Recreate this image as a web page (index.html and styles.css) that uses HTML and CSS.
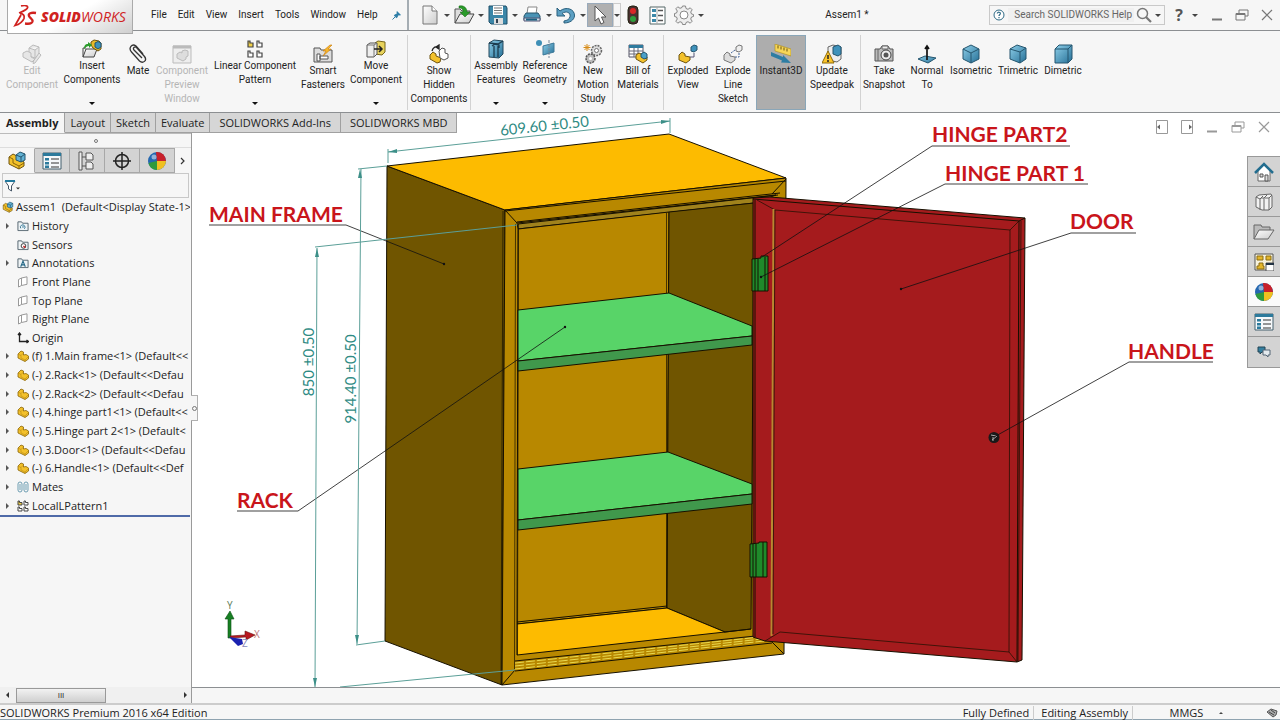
FILE: index.html
```html
<!DOCTYPE html>
<html lang="en">
<head>
<meta charset="utf-8">
<title>Assem1 - SOLIDWORKS</title>
<link rel="stylesheet" href="styles.css">
</head>
<body>
<svg class="defs" aria-hidden="true">
  <defs>
    <linearGradient id="blue" x1="0" y1="0" x2="1" y2="1"><stop offset="0" stop-color="#8fd0ea"/><stop offset="1" stop-color="#256f96"/></linearGradient>
    <linearGradient id="paper" x1="0" y1="0" x2="1" y2="1"><stop offset="0" stop-color="#fff"/><stop offset="1" stop-color="#ccc"/></linearGradient>
  </defs>
  <symbol id="i-part" viewBox="0 0 12 12"><path d="M1 4 4 1l2.500 1v3L9 4.500l2.500 1.500v3L8 11.500 1 8z" fill="#f3c12b" stroke="#8a6508" stroke-width=".8"/><path d="M1 4l3 1.500V8l4 2 3.500-3.500M4 5.500 6.500 3M8 10v1.500" fill="none" stroke="#b98a14" stroke-width=".6"/></symbol>
  <symbol id="i-asm" viewBox="0 0 20 20"><path d="M2 6 6 3l4 2v4l3-1 4 3v4l-5 3-10-5z" fill="#f3c12b" stroke="#6f5410"/><path d="M2 6l4 2v4l6 3 5-3M12 15v3" fill="none" stroke="#8a6508"/><path d="M9 4l4-3 5 2v6l-4 2-5-2z" fill="#63b2d4" stroke="#24556e"/><path d="M9 4l5 2 4-3M14 6v5" fill="none" stroke="#24556e"/></symbol>
  <symbol id="i-ball" viewBox="0 0 20 20"><circle cx="10" cy="10" r="9" fill="#2467b0"/><path d="M10 10 9 1A9 9 0 0 1 19 10z" fill="#c8202a"/><path d="M10 10h9A9 9 0 0 1 10 19z" fill="#f0c020"/><path d="M10 10v9A9 9 0 0 1 1.500 12z" fill="#2f9a3c"/><circle cx="7" cy="6" r="2.500" fill="#fff" opacity=".5"/></symbol>
  <symbol id="i-list" viewBox="0 0 20 18"><path d="M1 1h18v16H1z" fill="#f5f8fa" stroke="#44606e"/><path d="M1 1h18v3H1z" fill="#2c7a9c"/><path d="M3 6h4v2.500H3zM3 10h4v2.500H3zM3 13.500h4V16H3z" fill="#2c7a9c"/><path d="M9 7h8M9 11h8M9 15h8" stroke="#333"/></symbol>
  <symbol id="i-restore" viewBox="0 0 14 12"><path d="M4 4V1h9v6h-3M1 4.500h9V11H1z" fill="none" stroke="currentColor"/><path d="M1 5.500h9" stroke="currentColor"/></symbol>
  <symbol id="i-close" viewBox="0 0 12 12"><path d="M1 1l10 10M11 1 1 11" stroke="currentColor" stroke-width="1.200"/></symbol>
  <symbol id="i-min" viewBox="0 0 12 12"><path d="M1 10.500h10" stroke="currentColor" stroke-width="2"/></symbol>
  <symbol id="i-plane" viewBox="0 0 12 12"><path d="M1.500 3.500 4.500 2v7.500L1.500 11zM4.500 2 10 .8v7.500L4.500 9.500" fill="#fff" stroke="#999"/></symbol>
  <symbol id="i-folder" viewBox="0 0 13 12"><path d="M1 11V1.500h4L6 3h6v8z" fill="#eef3f5" stroke="#4e6069"/></symbol>
</svg>

<header class="titlebar">
  <div class="logo">
    <svg width="24" height="24" viewBox="0 0 24 24" fill="none" stroke="#d0221f"><path d="M8 1c5-1.500 9 .5 5 3.500-2 1.500-4 2.300-7 3.500" stroke-width="1.700"/><path d="M7 8.500c3 0 5 2 4 5-1.500 3.500-5 6-9 7L8 10" stroke-width="1.800"/><path d="M23 8c-5-.8-8 .5-7 3 1 2.500 4 3 3.500 5.500-.5 2-4 2.500-7.500 2" stroke-width="2.300"/></svg>
    <span class="wordmark"><b>SOLID</b>WORKS</span>
  </div>
  <nav class="menus">
    <button>File</button><button>Edit</button><button>View</button><button>Insert</button><button>Tools</button><button>Window</button><button>Help</button>
  </nav>
  <svg class="pin" width="10" height="10" viewBox="0 0 10 10"><path d="M5 1l4 4-1 .5-1.500-.3-1 2-1 1L1.800 5.500l1-1 2-1L4.500 2z" fill="#2f7fa8"/><path d="M3 7 .5 9.500" stroke="#2f7fa8"/></svg>
  <div class="quick">
    <button class="q" aria-label="New"><svg width="18" height="20" viewBox="0 0 18 20"><path d="M2 1h9l5 5v13H2z" fill="url(#paper)" stroke="#777"/><path d="M11 1v5h5" fill="#fff" stroke="#777"/></svg></button><button class="drop" aria-label="New options"></button>
    <button class="q" aria-label="Open"><svg width="22" height="20" viewBox="0 0 22 20"><path d="M2 18V4h5l2 2h8v4" fill="#ddd" stroke="#555"/><path d="M2 18 7 9h14l-5 9z" fill="url(#paper)" stroke="#444"/><path d="M6 1c5-1 8 2 8 6h3l-5 5-5-5h3c0-3-1-4-4-4z" fill="#2a9a2a" stroke="#176717" stroke-width=".5"/></svg></button><button class="drop" aria-label="Open options"></button>
    <button class="q" aria-label="Save"><svg width="20" height="20" viewBox="0 0 20 20"><path d="M1 1h17l1 2v16H3l-2-2z" fill="#3b86a8" stroke="#1f4f68"/><path d="M5 1h10v9H5z" fill="#fff"/><path d="M6 3h8M6 5.500h8M6 8h8" stroke="#777"/><path d="M6 13h9v6H6z" fill="#ddd"/><path d="M8 14h2v4H8z" fill="#345"/></svg></button><button class="drop" aria-label="Save options"></button>
    <button class="q" aria-label="Print"><svg width="18" height="18" viewBox="0 0 18 18"><path d="M5 1h9l-1 7H4z" fill="#fff" stroke="#888"/><path d="M3 7h12l2 3v4H1v-4z" fill="#4a93b5" stroke="#28566d"/><path d="M1 12h16v3H1z" fill="#cfdde4" stroke="#557"/><path d="M3 13.500h11" stroke="#1d6283" stroke-width="2"/></svg></button><button class="drop" aria-label="Print options"></button>
    <button class="q" aria-label="Undo"><svg width="20" height="18" viewBox="0 0 20 18"><path d="M1 2v8h8L6 7.500c4-3 9-1 8 3-.5 3-3 4-6 4.500v2c6 0 10-3 10.500-7C19 3 10 0 4 5z" fill="#5c9fc2" stroke="#285f7d"/></svg></button><button class="drop" aria-label="Undo options"></button>
    <button class="q select" aria-label="Select"><svg width="14" height="20" viewBox="0 0 14 20"><path d="M2 1v15l3.500-3L8 19l3-1.500L8.500 12H13z" fill="#fff" stroke="#555"/></svg></button><button class="drop boxed" aria-label="Select options"></button>
    <button class="q light" aria-label="Rebuild"><svg width="12" height="20" viewBox="0 0 12 20"><rect x="1" y="1" width="10" height="18" rx="4" fill="#4b3030" stroke="#221"/><circle cx="6" cy="6" r="3" fill="#d92727"/><circle cx="6" cy="14" r="3" fill="#2e9e3c"/></svg></button>
    <button class="q" aria-label="File properties"><svg width="17" height="19" viewBox="0 0 17 19"><path d="M1 1h15v17H1z" fill="#fff" stroke="#566"/><path d="M3 3h4v3H3zM3 8h4v3H3zM3 13h4v3H3z" fill="#3d88a8"/><path d="M9 4.500h5M9 9.500h5M9 14.500h5" stroke="#555" stroke-width="1.500"/><path d="M8 1v17" stroke="#aaa"/></svg></button>
    <button class="q" aria-label="Options"><svg width="20" height="20" viewBox="0 0 20 20" fill="#eee" stroke="#888"><path d="M8.500 1h3l.5 2.500 2 .8 2.200-1.500 2 2L16.700 7l.8 2 2 .5v2l-2 .5-.8 2 1.500 2.200-2 2-2.200-1.500-2 .8-.5 2h-3L8 17.500l-2-.8-2.200 1.500-2-2L3.300 14l-.8-2L.5 11.500v-3L2.500 8l.8-2-1.500-2.200 2-2L6 3.300l2-.8z"/><circle cx="10" cy="10" r="4" fill="#fff"/></svg></button><button class="drop" aria-label="More options"></button>
  </div>
  <h1 class="doc-title">Assem1 *</h1>
  <div class="search">
    <svg width="14" height="14" viewBox="0 0 14 14"><circle cx="7" cy="7" r="5" fill="#fff" stroke="#2f6b86"/><path d="M5.300 5.500c.2-2 3.500-1.500 3 .3-.3 1-1.300 1-1.300 2.200M7 9v1.200" fill="none" stroke="#2f6b86" stroke-width="1.200"/></svg>
    <input type="text" aria-label="Search help" placeholder="Search SOLIDWORKS Help">
    <svg width="16" height="16" viewBox="0 0 16 16" fill="none" stroke="#777"><circle cx="6.500" cy="6.500" r="5" stroke-width="1.500"/><path d="M10 10l5 5" stroke-width="2.200"/></svg>
    <button class="drop" aria-label="Search options"></button>
  </div>
  <div class="window-tools">
    <button class="help" aria-label="Help">?</button><button class="drop" aria-label="Help options"></button>
    <button aria-label="Minimize"><svg width="12" height="12"><use href="#i-min"/></svg></button>
    <button aria-label="Restore"><svg width="14" height="12"><use href="#i-restore"/></svg></button>
    <button aria-label="Close"><svg width="12" height="12"><use href="#i-close"/></svg></button>
  </div>
</header>

<div class="ribbon">
  <div class="group">
    <button class="tool w58" disabled><svg width="20" height="20" viewBox="0 0 20 20" fill="#e6e6e6" stroke="#bbb"><path d="M7 4l4-3 6 2v8l-4 3-6-2zM7 4l6 2 4-3M13 6v8"/><path d="M1 9l4-2 4 2v4l4 2-3 3-9-5zM17 9l2 2-6 8-2 .5.5-2.500z"/></svg><span>Edit<br>Component</span></button>
    <button class="tool menu w62"><svg width="20" height="20" viewBox="0 0 20 20"><path d="M1 18 4 10h11l-3 8z" fill="url(#paper)" stroke="#444"/><path d="M1 18V9h3" fill="none" stroke="#444"/><path d="M9 3l3-2 5 1 2 2v6l-3 2-5-3-2-3z" fill="#e9b928" stroke="#6f5410"/><path d="M13 4l3-1.500 3 1.500v4l-3 2-3-2z" fill="#3f92bb" stroke="#24556e"/><path d="M2 10c0-3 1-5 4-5V3l4 3-3 3V7C5 7 4 8 2 10z" fill="#2c9c2c"/></svg><span>Insert<br>Components</span></button>
    <button class="tool w30"><svg width="20" height="20" viewBox="0 0 20 20" fill="none" stroke="#333" stroke-width="1.300"><path d="M14 14 6 6c-1.500-2 .5-4 2.500-2.500l8 9c3 4-1.500 7.500-5 4.500l-8-9C0 4 4-1 8 2l7 8"/></svg><span>Mate</span></button>
    <button class="tool w58" disabled><svg width="20" height="20" viewBox="0 0 20 20" fill="#eee" stroke="#bbb"><path d="M1 2h18v17H1z"/><path d="M1 3h18" stroke-width="3"/><path d="M5 10l3-2 2 1V7l3-1 3 1v5l-2 1v2l-3 2-6-3z" fill="#ddd"/></svg><span>Component<br>Preview<br>Window</span></button>
    <button class="tool menu w88"><svg width="20" height="20" viewBox="0 0 20 20" fill="#fff" stroke="#444" stroke-width="1.200"><path d="M3 2h2v2h3v4H3z" fill="#f0d048"/><path d="M12 2h2v2h3v4h-5zM3 12h2v2h3v4H3zM12 12h2v2h3v4h-5z"/></svg><span>Linear Component<br>Pattern</span></button>
    <button class="tool w48"><svg width="20" height="20" viewBox="0 0 20 20"><path d="M1 18V4h6l1 2h11v12z" fill="#ddd" stroke="#555"/><path d="M4 10h3v7H4zM7 12h8v3H7z" fill="#fff" stroke="#555"/><path d="M17 1l-7 6h3l-3 5 8-7h-3l4-4z" fill="#f7b62b" stroke="#c77a0b" stroke-width=".6"/></svg><span>Smart<br>Fasteners</span></button>
    <button class="tool menu w58"><svg width="20" height="20" viewBox="0 0 20 20"><path d="M9 4l3-2 7 1v10l-3 3-7-1z" fill="#e8d35c" stroke="#77661a"/><path d="M1 6l3-2h7v11l-3 3H1z" fill="#eee" stroke="#555"/><path d="M1 6h7l3-2M8 6v12" fill="none" stroke="#777"/><path d="M8 10h8M13 7l3 3-3 3" fill="none" stroke="#222" stroke-width="1.500"/></svg><span>Move<br>Component</span></button>
  </div>
  <div class="group">
    <button class="tool w58"><svg width="20" height="20" viewBox="0 0 20 20"><path d="M1 11l3-3 3 2v2l5 2-1 4-3 1-7-4z" fill="#f3c12b" stroke="#6f5410"/><path d="M10 7l3-3 3 1v4l3 1v4l-4 2-4-2z" fill="#fff" stroke="#555"/><path d="M3 7c1-4 4-5 7-4M10 1v4l-3-2z" fill="none" stroke="#222" stroke-width="1.300"/></svg><span>Show<br>Hidden<br>Components</span></button>
  </div>
  <div class="group">
    <button class="tool menu w46"><svg width="20" height="20" viewBox="0 0 20 20"><path d="M3 4l5-3 9 1v13l-4 4-10-1z" fill="url(#blue)" stroke="#24485c"/><path d="M6 7l3-2 4 1v3M8 7v11M12 7v11M3 4l9 1 5-3" fill="none" stroke="#1d3d50" stroke-width="1.300"/></svg><span>Assembly<br>Features</span></button>
    <button class="tool menu w52"><svg width="20" height="20" viewBox="0 0 20 20"><circle cx="4" cy="4" r="3" fill="#3e8fb6"/><path d="M8 7l11-3v9L8 16z" fill="url(#blue)" stroke="#3c7898"/><path d="M14 1v18" stroke="#789" stroke-dasharray="3 1"/></svg><span>Reference<br>Geometry</span></button>
  </div>
  <div class="group">
    <button class="tool w34"><svg width="20" height="20" viewBox="0 0 20 20"><circle cx="13.500" cy="6.500" r="5" fill="#ddd" stroke="#666" stroke-width="1.500" stroke-dasharray="2 1"/><circle cx="13.500" cy="6.500" r="2" fill="#fff" stroke="#777"/><circle cx="7.500" cy="14.500" r="4.500" fill="#bbb" stroke="#555" stroke-width="1.500" stroke-dasharray="2 1"/><circle cx="7.500" cy="14.500" r="1.500" fill="#fff"/><path d="M4 0v7M.5 3.500h7M1.500 1l5 5M6.500 1l-5 5" stroke="#d78b16"/></svg><span>New<br>Motion<br>Study</span></button>
  </div>
  <div class="group">
    <button class="tool w46"><svg width="20" height="20" viewBox="0 0 20 20"><path d="M1 1h14v12H1z" fill="#fff" stroke="#556"/><path d="M1 1h14v3H1z" fill="#2f7b9e"/><path d="M1 7h14M1 10h14M6 4v9M10 4v9" stroke="#667"/><path d="M8 11l3-2 2 1 6 3v3l-4 3-7-4z" fill="#f3c12b" stroke="#6f5410"/><path d="M13 10l3-2 3 2v4l-3 1-3-2z" fill="#4aa0c8" stroke="#24556e"/></svg><span>Bill of<br>Materials</span></button>
  </div>
  <div class="group">
    <button class="tool w44"><svg width="20" height="20" viewBox="0 0 20 20"><path d="M1 11l3-3 3 2v2l5 1v3l-4 3-7-3z" fill="#f3c12b" stroke="#6f5410"/><path d="M13 3l3-2 3 1v4l-3 2-3-1z" fill="#3f92bb" stroke="#24556e"/><path d="M16 9v4h-4" fill="none" stroke="#557"/></svg><span>Exploded<br>View</span></button>
    <button class="tool w46"><svg width="20" height="20" viewBox="0 0 20 20"><path d="M1 11l3-3 3 2v2l5 1v3l-4 3-7-3z" fill="#ddd" stroke="#777"/><path d="M13 3l3-2 3 1v4l-3 2-3-1z" fill="#eee" stroke="#777"/><path d="M16 9v4h-4M8 9l4-3" fill="none" stroke="#469" stroke-dasharray="2 1"/></svg><span>Explode<br>Line<br>Sketch</span></button>
    <button class="tool w50 on" aria-pressed="true"><svg width="20" height="20" viewBox="0 0 20 20"><path d="M4 0l16 5v7L4 7z" fill="#f6d658" stroke="#ad8b18" stroke-width=".6"/><path d="M7 1.500v3M10 2.500v3M13 3.500v3M16 4.500v3" stroke="#6b5510"/><path d="M0 8l12 5v-2l8 8-10-.5 1-2L0 12z" fill="#2e7da3"/></svg><span>Instant3D</span></button>
    <button class="tool w52"><svg width="20" height="20" viewBox="0 0 20 20"><path d="M6 3l5-2 8 2v12l-4 3-9-2z" fill="#eee" stroke="#666"/><path d="M11 3l5-2 3 2v7l-3 2-5-2z" fill="#3f92bb" stroke="#24556e"/><path d="M6 7l6 12H0z" fill="#fcc52c" stroke="#8c6a0b"/><path d="M6 11v4M6 16v2" stroke="#222" stroke-width="1.500"/></svg><span>Update<br>Speedpak</span></button>
  </div>
  <div class="group last">
    <button class="tool w42"><svg width="20" height="20" viewBox="0 0 20 20"><path d="M1 5h5l2-3h6l2 3h3v12H1z" fill="#bbb" stroke="#555"/><path d="M4 5v12M8 2h6v3H8z" fill="#eee" stroke="#666"/><circle cx="12" cy="11" r="5" fill="#eee" stroke="#444"/><circle cx="12" cy="11" r="2.500" fill="#555"/></svg><span>Take<br>Snapshot</span></button>
    <button class="tool w44"><svg width="20" height="20" viewBox="0 0 20 20"><path d="M1 15l7-3 11 2-8 5z" fill="url(#blue)" stroke="#24556e"/><path d="M10 16V2M8 5l2-3 2 3" fill="none" stroke="#111" stroke-width="1.700"/></svg><span>Normal<br>To</span></button>
    <button class="tool w44"><svg width="20" height="20" viewBox="0 0 20 20"><path d="M10 1l8 4v10l-8 4-8-4V5z" fill="url(#blue)" stroke="#24556e"/><path d="M2 5l8 4 8-4M10 9v10" fill="none" stroke="#24556e"/></svg><span>Isometric</span></button>
    <button class="tool w50"><svg width="20" height="20" viewBox="0 0 20 20"><path d="M9 1l9 3v11l-6 4-10-4V5z" fill="url(#blue)" stroke="#24556e"/><path d="M2 5l10 3 6-4M12 8v11" fill="none" stroke="#24556e"/></svg><span>Trimetric</span></button>
    <button class="tool w40"><svg width="20" height="20" viewBox="0 0 20 20"><path d="M6 1h13v14l-4 4H2V5z" fill="url(#blue)" stroke="#24556e"/><path d="M2 5h13l4-4M15 5v14" fill="none" stroke="#24556e"/></svg><span>Dimetric</span></button>
  </div>
</div>

<main class="workspace">
  <nav class="tabs">
    <button class="active">Assembly</button><button>Layout</button><button>Sketch</button><button>Evaluate</button><button class="wide">SOLIDWORKS Add-Ins</button><button class="wide">SOLIDWORKS MBD</button>
  </nav>

  <aside class="side">
    <div class="grip"><i></i></div>
    <div class="side-tabs">
      <button class="active" aria-label="Feature tree"><svg width="20" height="20"><use href="#i-asm"/></svg></button>
      <button aria-label="Properties"><svg width="20" height="18"><use href="#i-list"/></svg></button>
      <button aria-label="Configurations"><svg width="18" height="20" viewBox="0 0 18 20" fill="#eee" stroke="#555"><path d="M1 1h3v18H1zM4 6h4M4 15h4" /><path d="M8 2h5l2 2v5H8zM8 11h5l2 2v5H8z"/></svg></button>
      <button aria-label="Dimensions"><svg width="20" height="20" viewBox="0 0 20 20" fill="none" stroke="#222" stroke-width="1.500"><circle cx="10" cy="10" r="6.500"/><path d="M10 1v18M1 10h18"/></svg></button>
      <button aria-label="Display"><svg width="20" height="20"><use href="#i-ball"/></svg></button>
      <button class="more" aria-label="More tabs"><svg width="6" height="8" viewBox="0 0 6 8"><path d="M1 1l3 3-3 3" fill="none" stroke="#333" stroke-width="1.200"/></svg></button>
    </div>
    <div class="filter"><button aria-label="Filter"><svg width="18" height="14" viewBox="0 0 18 14"><path d="M1 2h10L7.500 7v5l-3-2V7z" fill="#fff" stroke="#456"/><path d="M1 2h10" stroke="#237a9e" stroke-width="2"/><path d="M12 8.500h4l-2 2z" fill="#333"/></svg></button></div>
    <ul class="tree">
      <li class="root"><svg width="12" height="13"><use href="#i-asm"/></svg>Assem1&nbsp; (Default&lt;Display State-1&gt;</li>
      <li class="kids"><svg width="12" height="12" viewBox="0 0 13 12"><use href="#i-folder"/><path d="M4 8.500a2.500 2.500 0 1 1 4 .5M6.500 8V6" fill="none" stroke="#2d7392"/></svg>History</li>
      <li><svg width="12" height="12" viewBox="0 0 13 12"><use href="#i-folder"/><circle cx="7" cy="7" r="2.500" fill="#fff" stroke="#333"/><path d="M7 7l2 2" stroke="#c22" stroke-width="1.500"/></svg>Sensors</li>
      <li class="kids"><svg width="12" height="12" viewBox="0 0 13 12"><use href="#i-folder"/><path d="M4 10l2.500-6L9 10M5 8h3" fill="none" stroke="#1f6484" stroke-width="1.200"/></svg>Annotations</li>
      <li><svg width="12" height="12"><use href="#i-plane"/></svg>Front Plane</li>
      <li><svg width="12" height="12"><use href="#i-plane"/></svg>Top Plane</li>
      <li><svg width="12" height="12"><use href="#i-plane"/></svg>Right Plane</li>
      <li><svg width="12" height="12" viewBox="0 0 12 12"><path d="M2.500 1v8.500H11M1 3l1.500-2L4 3M9.500 8l2 1.500-2 1.500" fill="none" stroke="#222" stroke-width="1.300"/></svg>Origin</li>
      <li class="kids"><svg width="12" height="12"><use href="#i-part"/></svg>(f) 1.Main frame&lt;1&gt; (Default&lt;&lt;</li>
      <li class="kids"><svg width="12" height="12"><use href="#i-part"/></svg>(-) 2.Rack&lt;1&gt; (Default&lt;&lt;Defau</li>
      <li class="kids"><svg width="12" height="12"><use href="#i-part"/></svg>(-) 2.Rack&lt;2&gt; (Default&lt;&lt;Defau</li>
      <li class="kids"><svg width="12" height="12"><use href="#i-part"/></svg>(-) 4.hinge part1&lt;1&gt; (Default&lt;&lt;</li>
      <li class="kids"><svg width="12" height="12"><use href="#i-part"/></svg>(-) 5.Hinge part 2&lt;1&gt; (Default&lt;</li>
      <li class="kids"><svg width="12" height="12"><use href="#i-part"/></svg>(-) 3.Door&lt;1&gt; (Default&lt;&lt;Defau</li>
      <li class="kids"><svg width="12" height="12"><use href="#i-part"/></svg>(-) 6.Handle&lt;1&gt; (Default&lt;&lt;Def</li>
      <li class="kids"><svg width="12" height="12" viewBox="0 0 12 12" fill="none" stroke="#6f9fb3"><rect x="1" y="1" width="4" height="10" rx="2"/><rect x="7" y="1" width="4" height="10" rx="2"/><path d="M3 3v6M9 3v6"/></svg>Mates</li>
      <li class="kids"><svg width="12" height="12" viewBox="0 0 12 12" fill="#fff" stroke="#444"><path d="M1 1h1.500v1.500h2.500V5H1z" fill="#f0d048"/><path d="M7 1h1.500v1.500H11V5H7zM1 7h1.500v1.500h2.500V11H1zM7 7h1.500v1.500H11V11H7z"/></svg>LocalLPattern1</li>
    </ul>
    <button class="collapse" aria-label="Collapse panel"></button>
  </aside>

  <section class="viewport">
    <svg class="scene" viewBox="192 113 1088 574" role="img" aria-label="Cabinet assembly">
      <g class="edge">
        <path class="dark" d="M387 166 505 210 502 685 385 641z"/>
        <path class="bright" d="M387 166 669 134 786 178 505 210z"/>
        <path class="gold" d="M505 210 786 178 784 654 502 685z"/>
        <path class="olive" d="M517 223 776 195 754 203 518 229z"/>
        <path class="gold" d="M518 229 669 212 667 608 517 624z"/>
        <path class="dark" d="M669 212 754 203 751 629 725 632 667 608z"/>
        <path class="bright" d="M517 624 667 608 725 632 517 655z"/>
        <path class="bare" d="M517 622 667 606M505 211 786 181M517 222 780 193M518 224 778 195M505 210 517 223M786 179 772 194M502 685 515 670M784 654 772 642M515 671 772 643M725 632 751 629M515 661 765 635"/>
        <path class="bare thin" d="M666.500 213V608M503 211 501 684M515.500 224 514.500 669M518.500 224 517.500 655"/>
        <path d="M515 663 760 637M515 666 762 639M515 669 764 641" class="stripe"/>
        <path class="green" d="M518 310 669 293 752 326 752 336 518 361z"/>
        <path class="green-front" d="M518 361 752 336 752 345 518 371z"/>
        <path class="green" d="M518 469 668 452 752 484 752 494 518 520z"/>
        <path class="green-front" d="M518 520 752 494 752 504 518 530z"/>
        <path class="red" d="M753 198 770 197 1025 218 1022 660 1017 662 765 641 753 637z"/>
        <path class="bare" d="M753 199 1019 221 1017 662M1019 221 1025 218M755 200V637"/>
        <path class="bare thin" d="M1021 221 1018 661M757 200 775 210 1010 230 1009 652 780 632 765 641M1010 230 1019 221M1009 652 1017 662"/>
        <path class="brass" d="M773.500 209 771.500 636"/>
        <path class="bare thin" d="M775 210 773 634"/>
        <path class="hinge" d="M752 259 761 258V256H768V291H752z"/><path class="bare" d="M755 259V291M758 259V291M765 257V291"/>
        <path class="hinge" d="M750 544 759 543V542H767V577H750z"/><path class="bare" d="M753 544V577M756 544V577M763 542V577"/>
      </g>
      <circle cx="994" cy="437.500" r="5.500" fill="#191919"/><path d="M991 435l5 1M992 440l5-4M993 437v4" stroke="#aaa"/>
      <path class="leader" d="M209 225H346L444 264M237 511H298L565 327M1070 146H932L762 257M1088 184H945L761 277M1136 233H1071L901 289M1213 362H1129L994 437"/>
      <g fill="#111"><circle cx="444" cy="264" r="1.200"/><circle cx="565" cy="327" r="1.200"/><circle cx="761" cy="277" r="1.200"/><circle cx="901" cy="289" r="1.200"/></g>
      <g class="callout">
        <text x="209" y="222">MAIN FRAME</text><text x="237" y="508">RACK</text><text x="932" y="142">HINGE PART2</text><text x="945" y="181">HINGE PART 1</text><text x="1070" y="229">DOOR</text><text x="1128" y="359">HANDLE</text>
      </g>
      <path class="dim" d="M388 152 670 121M388 149V163M670 118V133M361 169 357 644M358 169 387 166M356 645 385 641M317 248 315 687M315 247 517 225M340 687 515 670"/>
      <path class="head" d="M388 152l9-3v4zM670 121l-9-1v4zM360 169l-2 9h4zM357 644l-2-9h4zM317 248l-2 9h4zM315 687l-2-9h4z"/>
      <g class="dim-text">
        <text transform="translate(545 131) rotate(-6)">609.60 ±0.50</text>
        <text transform="translate(356 379) rotate(-90)">914.40 ±0.50</text>
        <text transform="translate(314 362) rotate(-90)">850 ±0.50</text>
      </g>
      <g class="triad">
        <path d="M228 638V619h-3l5-8 4 8h-3v19z" fill="#178023" stroke="#0c4f14" stroke-width=".6"/>
        <path d="M230 636l15-1v-4l10 4-9 5v-3l-15 1z" fill="#b81820" stroke="#611" stroke-width=".6"/>
        <path d="M229 637l13 2 1 5-5 2z" fill="#1b22b0"/>
        <text x="227" y="609" fill="#567a56">Y</text><text x="254" y="638" fill="#b77">X</text><text x="242" y="647" fill="#88b">Z</text>
      </g>
    </svg>
    <div class="view-tools">
      <button aria-label="Previous view"><svg width="12" height="14" viewBox="0 0 12 14"><path d="M1 .5h10.500v13H.5V.5z" fill="#fff" stroke="#999"/><path d="M4 4.500v5L1 7z" fill="#666"/></svg></button>
      <button aria-label="Next view"><svg width="12" height="14" viewBox="0 0 12 14"><path d="M1 .5h10.500v13H.5V.5z" fill="#fff" stroke="#999"/><path d="M8 4.500v5L11 7z" fill="#666"/></svg></button>
      <button aria-label="Minimize document"><svg width="12" height="12"><use href="#i-min"/></svg></button>
      <button aria-label="Restore document"><svg width="14" height="12"><use href="#i-restore"/></svg></button>
      <button aria-label="Close document"><svg width="12" height="12"><use href="#i-close"/></svg></button>
    </div>
    <nav class="task-pane">
      <button aria-label="Home"><svg width="20" height="20" viewBox="0 0 20 20"><path d="M4 9v10h12V9l-6-6z" fill="#fff" stroke="#666"/><path d="M11 13h3v6h-3zM6 12h3v3H6z" fill="#ddd" stroke="#555"/><path d="M1 11l9-9 9 9" fill="none" stroke="#226d8f" stroke-width="2.500"/></svg></button>
      <button aria-label="Design library"><svg width="18" height="18" viewBox="0 0 18 18" fill="#f2f2f2" stroke="#666"><path d="M1 4l3-2 12-1 1 2v11l-3 3H7L1 14z"/><path d="M1 4l4 2v11M5 6l3-3M6 5h3v12M9 5l3-3M10 5h4v12M14 5l3-3" fill="none"/></svg></button>
      <button aria-label="File explorer"><svg width="22" height="18" viewBox="0 0 22 18"><path d="M1 16V2h7l1 2h8v4" fill="#bbb" stroke="#666"/><path d="M1 16 6 7h15l-6 9z" fill="url(#paper)" stroke="#666"/></svg></button>
      <button aria-label="View palette"><svg width="20" height="18" viewBox="0 0 20 18"><path d="M1 1h18v16H1z" fill="#f7f2dc" stroke="#555"/><path d="M3 3h6v4H3zM12 3h5v4h-5zM3 13h2v-3h4v3h1v3H3z" fill="#e4b62a" stroke="#8b6c12"/><path d="M12 10h8v8h-8z" fill="#fff" stroke="#555"/><path d="M12 11h8" stroke="#234" stroke-width="2"/></svg></button>
      <button class="active" aria-label="Appearances"><svg width="20" height="20"><use href="#i-ball"/></svg></button>
      <button aria-label="Custom properties"><svg width="20" height="18"><use href="#i-list"/></svg></button>
      <button aria-label="Forum"><svg width="14" height="12" viewBox="0 0 14 12"><path d="M1 1h7v5H5L3 8V6H1z" fill="#347f9f" stroke="#245"/><path d="M6 4h7v5h-2v2L9 9H6z" fill="#e4eaee" stroke="#567"/></svg></button>
    </nav>
  </section>

  <div class="side-scroll"><i class="left"></i><span class="thumb">III</span><i class="right"></i></div>
  <div class="view-foot"></div>
</main>

<footer class="status">
  <span class="edition">SOLIDWORKS Premium 2016 x64 Edition</span>
  <span class="cell">Fully Defined</span>
  <span class="cell">Editing Assembly</span>
  <button class="units">MMGS<i></i></button>
  <svg width="12" height="10" viewBox="0 0 12 10"><path d="M1 4l4-3 6 2-1 4-3 2z" fill="#aaa" stroke="#555"/><path d="M3 4l5 3M5 2l4 3" stroke="#444"/></svg>
</footer>
</body>
</html>
```

FILE: styles.css
```css
* { box-sizing: border-box; }
body { margin: 0; min-height: 100vh; display: flex; flex-direction: column; background: #f6f6f6; color: #222; font: 11px/14px "Open Sans", "Noto Sans", sans-serif; overflow: hidden; }
button { border: 0; padding: 0; margin: 0; background: none; color: inherit; font: inherit; display: flex; align-items: center; justify-content: center; flex: none; }
svg { display: block; flex: none; }
.defs { position: absolute; width: 0; height: 0; }

.titlebar { height: 31px; display: flex; align-items: center; border-bottom: 1px solid #8c8f92; flex: none; }
.logo { width: 126px; height: 34px; margin-left: 7px; padding-left: 5px; align-self: flex-start; display: flex; align-items: center; gap: 4px; position: relative; z-index: 1; border: 1px solid #aaa; border-top: 0; background: linear-gradient(150deg, #fff 50%, #cfcfcf); }
.wordmark { font: italic 14px/18px "Open Sans", sans-serif; color: #d0221f; }
.wordmark b { font-weight: 800; }
.menus { display: flex; gap: 11px; margin-left: 18px; font: 10px/14px Roboto, sans-serif; }
.pin { margin-left: 14px; }
.quick { display: flex; align-items: center; height: 30px; margin-left: 5px; padding-left: 8px; border-left: 2px solid #a5adb3; }
.q { width: 26px; height: 24px; }
.drop { width: 8px; height: 24px; }
.drop::before { content: ""; border: 3px solid transparent; border-top-color: #444; border-bottom: 0; }
.select { background: #b0b0b0; border: 1px solid #9ab; }
.boxed { border: 1px solid #ccc; }
.light { width: 24px; }
.doc-title { flex: 1; margin: 0; text-align: center; font: 10px/14px Roboto, sans-serif; }
.search { width: 176px; height: 20px; display: flex; align-items: center; gap: 2px; padding: 0 2px; border: 1px solid #c9c9c9; }
.search input { flex: 1; min-width: 0; height: 14px; padding: 0 0 0 6px; border: 0; background: #f0f0f0; font: 10px/14px Roboto, sans-serif; color: #666; }
.search input::placeholder { color: #666; opacity: 1; }
.window-tools { display: flex; align-items: center; gap: 12px; padding: 0 7px 0 10px; color: #777; }
.window-tools .help { font: bold 16px/20px "Open Sans", sans-serif; color: #555; }
.window-tools .drop { margin-left: -4px; }

.ribbon { height: 82px; padding: 4px 1px 2px; display: flex; border-bottom: 1px solid #8c8f92; flex: none; font: 10px/14px Roboto, sans-serif; }
.group { display: flex; padding: 0 2px; border-right: 1px solid #d2d2d2; }
.group.last { border: 0; }
.tool { flex-direction: column; justify-content: flex-start; padding-top: 9px; white-space: nowrap; }
.tool.menu { padding-top: 4px; }
.tool.menu::after { content: ""; margin-top: 15px; border: 3px solid transparent; border-top-color: #111; border-bottom: 0; }
.tool:disabled { color: #b5b5b5; }
.tool.on { background: #adadad; border: 1px solid #8aa6b8; padding-top: 8px; }
.w30 { width: 30px; } .w34 { width: 34px; } .w40 { width: 40px; } .w42 { width: 42px; }
.w44 { width: 44px; } .w46 { width: 46px; } .w48 { width: 48px; } .w50 { width: 50px; }
.w52 { width: 52px; } .w58 { width: 58px; } .w62 { width: 62px; } .w88 { width: 88px; }

.workspace { flex: 1; min-height: 0; display: grid; grid-template-columns: 192px 1fr; grid-template-rows: 20px 1fr 16px; }
.tabs { grid-area: 1 / 1 / 2 / 3; display: flex; z-index: 1; justify-self: start; }
.tabs button { padding: 0 5px; border: 1px solid #a0a0a0; border-width: 0 1px 1px 0; background: #d6d6d6; }
.tabs .wide { padding: 0 9px; }
.tabs .active { padding: 0 6px; background: #f6f6f6; border-bottom-color: #f6f6f6; font-weight: bold; }

.side { grid-area: 2 / 1 / 3 / 2; position: relative; display: flex; flex-direction: column; border-right: 1px solid #9a9a9a; }
.grip { height: 15px; display: flex; align-items: center; justify-content: center; border-top: 1px solid #bbb; border-bottom: 1px solid #ddd; }
.grip i { width: 4px; height: 4px; border: 1px solid #777; border-radius: 50%; }
.side-tabs { height: 25px; display: flex; }
.side-tabs button { width: 35px; background: #d3d3d3; border: 1px solid #a8a8a8; border-left: 0; }
.side-tabs .active { background: #f6f6f6; border-color: #f6f6f6 #a8a8a8 #f6f6f6 #f6f6f6; }
.side-tabs .more { flex: 1; width: auto; background: none; border: 0; }
.filter { height: 25px; margin: 0 2px; padding: 5px 0 0 1px; border: 1px solid #c8c8c8; }
.tree { list-style: none; height: 319px; margin: 0 1px 0 0; padding: 0; display: grid; grid-auto-rows: 1fr; border-bottom: 2px solid #4f6aa8; overflow: hidden; }
.tree li { display: flex; align-items: center; gap: 3px; padding-left: 17px; white-space: nowrap; min-width: 0; overflow: hidden; }
.tree .root { padding-left: 2px; gap: 2px; }
.tree li::before { content: ""; display: none; }
.tree .kids { padding-left: 6px; }
.tree .kids::before { display: block; margin-right: 2px; border: 3px solid transparent; border-left-color: #555; border-right: 0; }
.tree .kids svg { margin-left: 3px; }
.collapse { position: absolute; right: -7px; top: 262px; width: 7px; height: 26px; background: #f6f6f6; border: 1px solid #b0b0b0; border-left: 0; z-index: 2; }
.collapse::before { content: ""; width: 3px; height: 3px; border: 1px solid #777; border-radius: 50%; }

.viewport { grid-area: 1 / 2 / 3 / 3; position: relative; background: #fff; min-height: 0; }
.scene { width: 100%; height: 100%; }
.edge path { stroke: #161000; stroke-width: 1; }
.dark { fill: #705500; }
.bright { fill: #fdbb00; }
.gold { fill: #b88800; }
.olive { fill: #a0821c; }
.green { fill: #58d468; }
.green-front { fill: #40984c; }
.red { fill: #a51b1d; }
.hinge { fill: #1f8a2a; }
.bare { fill: none; }
.edge .thin { stroke-opacity: .7; }
.edge .stripe { stroke: #e8d850; stroke-dasharray: 9 2; }
.edge .brass { stroke: #b88830; stroke-width: 2; }
.leader { fill: none; stroke: #111; stroke-width: 1; stroke-opacity: .8; }
.callout { font: bold 21px Lato, sans-serif; fill: #c9151b; }
.dim { fill: none; stroke: #5b9f98; stroke-width: 1; }
.head { fill: #3c8f88; }
.dim-text { font: 15px Lato, sans-serif; fill: #2f8b84; text-anchor: middle; }
.triad { font: 10px "Open Sans", sans-serif; }
.view-tools { position: absolute; top: 7px; right: 10px; display: flex; align-items: center; gap: 13px; color: #999; }
.task-pane { position: absolute; top: 43px; right: 0; width: 33px; border: 1px solid #999; border-right: 0; }
.task-pane button { width: 100%; height: 30px; background: #d3d3d3; border-bottom: 1px solid #999; }
.task-pane button:last-child { border: 0; }
.task-pane .active { background: #fafafa; }

.side-scroll { grid-area: 3 / 1 / 4 / 2; display: flex; align-items: center; padding: 0 4px 0 6px; border-right: 1px solid #9a9a9a; background: #f0f0f0; }
.side-scroll i { border: 3px solid transparent; }
.side-scroll .left { border-right-color: #333; border-left: 0; margin-right: 7px; }
.side-scroll .right { border-left-color: #333; border-right: 0; margin-left: auto; }
.thumb { width: 90px; height: 15px; border: 1px solid #999; background: linear-gradient(#f2f2f2, #cfcfcf); text-align: center; font: 8px/12px "Open Sans", sans-serif; }
.view-foot { grid-area: 3 / 2 / 4 / 3; border-top: 1px solid #8c8f92; }

.status { height: 17px; flex: none; display: flex; align-items: center; padding-right: 2px; border-top: 2px solid #ccc; box-shadow: inset 0 -1px #8fa3b0; }
.edition { flex: 1; }
.cell { padding: 0 4px 0 7px; border-right: 1px solid #ccc; }
.units { width: 133px; gap: 16px; padding-right: 6px; }
.units i { border: 2px solid transparent; border-bottom-color: #444; border-top: 0; }
```
